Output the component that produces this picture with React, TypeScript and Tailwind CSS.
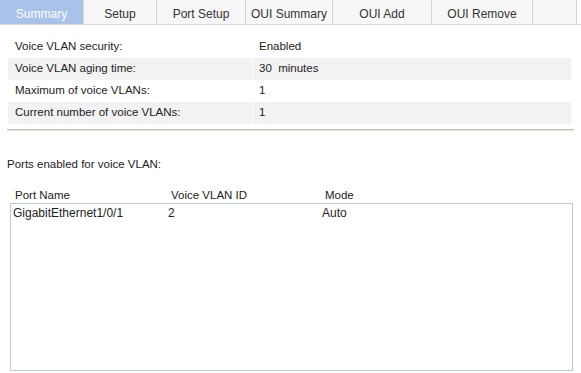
import React from 'react';

const tabs = [
  { label: 'Summary', w: 'w-[84px]', active: true },
  { label: 'Setup', w: 'w-[73px]' },
  { label: 'Port Setup', w: 'w-[89px]' },
  { label: 'OUI Summary', w: 'w-[87px]' },
  { label: 'OUI Add', w: 'w-[99px]' },
  { label: 'OUI Remove', w: 'w-[101px]' },
  { label: '', w: 'w-[44px]' },
];

const summary = [
  ['Voice VLAN security:', 'Enabled'],
  ['Voice VLAN aging time:', '30  minutes'],
  ['Maximum of voice VLANs:', '1'],
  ['Current number of voice VLANs:', '1'],
];

const App: React.FC = () => {
  return (
    <div className="w-[581px] h-[373px] bg-white text-[11.5px] text-[#222] overflow-hidden font-['Liberation_Sans',Arial,sans-serif]">
      <div className="flex h-[25px] border-b border-[#d8d8d8]">
        {tabs.map((t, i) => (
          <div
            key={i}
            className={`${t.w} flex justify-center pt-[7px] text-[12px] leading-[14px] border-r border-[#d4d4d4] ${
              t.active ? 'bg-[#a9c2ea] text-white' : 'bg-[#f7f7f7] text-[#333]'
            }`}
          >
            {t.label}
          </div>
        ))}
      </div>

      <div className="mt-[11px] mx-[8px] w-[563px]">
        {summary.map(([k, v], i) => (
          <div key={k} className="flex h-[22px] items-center gap-[1px]">
            <div className={`w-[244px] h-full flex items-center pl-[7px] ${i % 2 ? 'bg-[#f2f2f2]' : ''}`}>{k}</div>
            <div className={`flex-1 h-full flex items-center pl-[6px] whitespace-pre ${i % 2 ? 'bg-[#f2f2f2]' : ''}`}>{v}</div>
          </div>
        ))}
      </div>

      <div className="mt-[5px] mx-[7px] h-[2px] bg-[#c4c4b4] border-b border-[#e4e4dc]" />

      <div className="mt-[25px] pl-[7px]">Ports enabled for voice VLAN:</div>

      <div className="mt-[14px] ml-[10px] w-[563px]">
        <div className="flex h-[16px] items-center">
          <div className="w-[156px] pl-[5px]">Port Name</div>
          <div className="w-[154px] pl-[5px]">Voice VLAN ID</div>
          <div className="pl-[5px]">Mode</div>
        </div>
        <div className="h-[168px] border border-[#b9c9de]">
          <div className="flex h-[18px] items-center text-[12px]">
            <div className="w-[155px] pl-[2px]">GigabitEthernet1/0/1</div>
            <div className="w-[154px] pl-[2px]">2</div>
            <div className="pl-[2px]">Auto</div>
          </div>
        </div>
      </div>
    </div>
  );
};

export default App;
